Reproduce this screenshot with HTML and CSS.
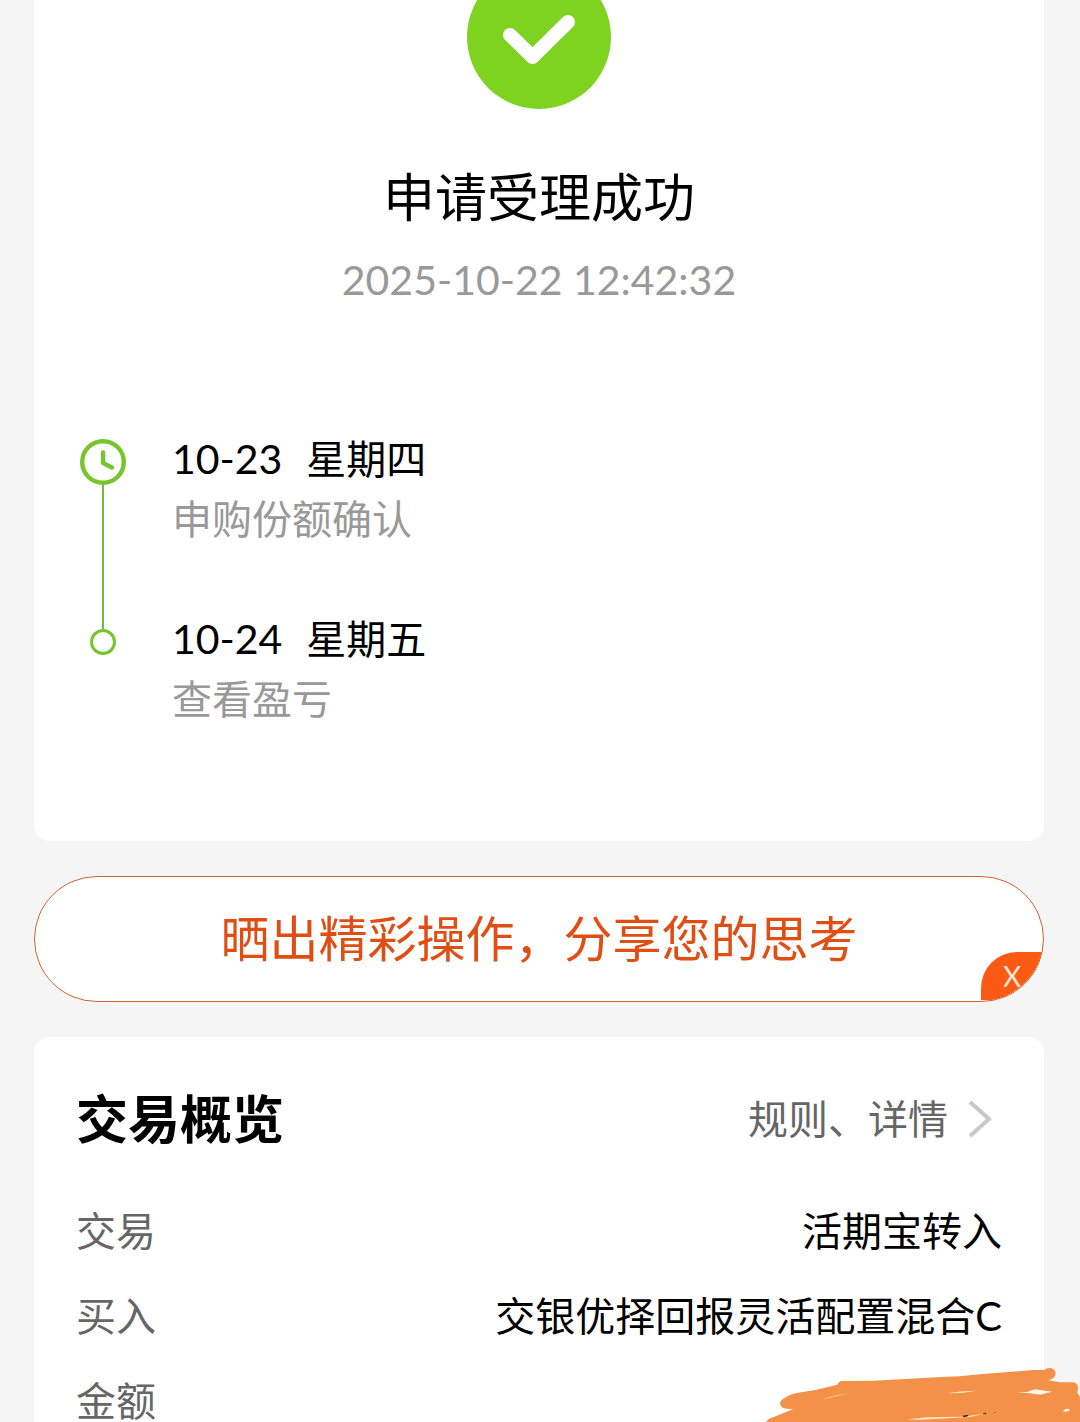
FILE: index.html
```html
<!DOCTYPE html>
<html lang="zh-CN">
<head>
    <meta charset="UTF-8">
    <meta name="viewport" content="width=device-width, initial-scale=1.0">
    <title>申请受理成功</title>

    <link rel="stylesheet" href="styles.css">
</head>
<body>
    <main class="page">
        <!-- result -->
        <section class="card result">
            <svg class="success-icon" viewBox="0 35 144 109" aria-hidden="true">
                <circle cx="72" cy="72" r="72" fill="#7ed321"/>
                <path d="M43 70 L65.500 92 L101 57" fill="none" stroke="#fff" stroke-width="14" stroke-linecap="round" stroke-linejoin="round"/>
            </svg>
            <h1 class="result-title">申请受理成功</h1>
            <time class="result-time">2025-10-22 12:42:32</time>

            <div class="timeline">
                <div class="timeline-track">
                    <svg class="clock-icon" viewBox="0 0 46 46" aria-hidden="true">
                        <circle cx="23" cy="23" r="20.800" fill="none" stroke="#76c62b" stroke-width="4.400"/>
                        <path d="M23 13.500 V24 L32 28.500" fill="none" stroke="#76c62b" stroke-width="4.400" stroke-linecap="round" stroke-linejoin="round"/>
                    </svg>
                    <span class="timeline-line"></span>
                    <span class="timeline-dot"></span>
                </div>
                <ol class="timeline-list">
                    <li>
                        <p class="step-date"><span class="step-day">10-23</span><span>星期四</span></p>
                        <p class="step-name">申购份额确认</p>
                    </li>
                    <li>
                        <p class="step-date"><span class="step-day">10-24</span><span>星期五</span></p>
                        <p class="step-name">查看盈亏</p>
                    </li>
                </ol>
            </div>
        </section>

        <!-- share banner -->
        <div class="share">
            <button type="button" class="share-btn">晒出精彩操作，分享您的思考</button>
            <button type="button" class="share-close" aria-label="关闭">X</button>
        </div>

        <!-- overview -->
        <section class="card overview">
            <div class="overview-head">
                <h2 class="overview-title">交易概览</h2>
                <a href="#" class="overview-link">
                    规则、详情
                    <svg class="chevron" viewBox="0 0 24 38" aria-hidden="true">
                        <path d="M2 2 L21 19 L2 36" fill="none" stroke="#c8c8c8" stroke-width="4"/>
                    </svg>
                </a>
            </div>
            <dl class="detail-list">
                <div class="detail-row">
                    <dt>交易</dt>
                    <dd>活期宝转入</dd>
                </div>
                <div class="detail-row">
                    <dt>买入</dt>
                    <dd>交银优择回报灵活配置混合C</dd>
                </div>
                <div class="detail-row">
                    <dt>金额</dt>
                    <dd></dd>
                </div>
            </dl>
            <!-- marker strokes hiding the amount -->
            <svg class="scribble" viewBox="60 48 960 168" aria-hidden="true">
                <path fill="#f39149" d="M78 216 Q84 206 100 202 L160 177 L140 176 Q120 174 120 158 Q122 150 135 143 Q150 132 170 129 Q230 121 292 104 Q297 93 305 93 Q350 92 400 92 L590 82 Q660 80 720 73 L880 60 L912 60 Q920 54 930 54 Q946 56 947 72 Q944 86 925 91 L960 97 L1000 97 Q1014 100 1014 114 L1012 130 Q1020 136 1020 146 V216 Z"/>
                <path fill="#fde3c0" d="M250 146 L290 136 L328 130 L300 136 L252 147 Z M622 130 Q660 122 710 122 L665 129 Z M502 208 L560 202 L665 200 L735 191 L690 201 L600 206 L535 210 Z"/>
                <path fill="#fff8ec" d="M830 129 L860 126 L885 118 L936 125 L900 134 L865 129 Z M968 185 L976 177 L989 176 L986 184 Z"/>
                <path fill="#3a2010" d="M668 197 L685 194 L684 199 L671 202 Z M729 190 L738 188 L739 191 L731 192 Z M762 187 L766 186 L765 189 Z"/>
            </svg>
        </section>
    </main>
</body>
</html>
```
FILE: styles.css
```css
* {
    box-sizing: border-box;
}

body {
    margin: 0;
    background-color: #f5f5f5;
    color: #000;
    font-family: "Lato", "Noto Sans CJK SC", sans-serif;
    font-size: 40px;
    line-height: 60px;
}

h1, h2, p, ol, dl, dd {
    margin: 0;
    padding: 0;
}

button {
    font-family: inherit;
    border: none;
    cursor: pointer;
}

.page {
    display: flex;
    flex-direction: column;
    gap: 35px;
    padding: 0 36px 0 34px;
}

.card {
    position: relative;
    background-color: #fff;
    border-radius: 16px;
    padding: 52px 42px;
}

/* result */
.result {
    display: flex;
    flex-direction: column;
    align-items: center;
    border-radius: 0 0 16px 16px;
    padding-top: 0;
    padding-bottom: 112px;
}

.success-icon {
    width: 144px;
    height: 109px;
}

.result-title {
    margin-top: 58px;
    font-size: 52px;
    font-weight: 400;
}

.result-time {
    margin-top: 23px;
    font-size: 41px;
    color: #999;
}

.timeline {
    display: flex;
    gap: 42px;
    align-self: stretch;
    margin-top: 119px;
}

.timeline-track {
    display: flex;
    flex-direction: column;
    align-items: center;
    width: 54px;
    padding: 10px 0 74px;
}

.clock-icon {
    width: 46px;
    height: 46px;
}

.timeline-line {
    flex: 1;
    width: 2px;
    background-color: #76b840;
}

.timeline-dot {
    width: 26px;
    height: 26px;
    border: 3px solid #76c62b;
    border-radius: 50%;
}

.timeline-list {
    display: flex;
    flex-direction: column;
    gap: 60px;
    list-style: none;
}

.step-date {
    display: flex;
    gap: 24px;
}

.step-day {
    font-size: 41px;
}

.step-name {
    color: #999;
}

/* share banner */
.share {
    position: relative;
    overflow: hidden;
    border: 1px solid #d2622f;
    border-radius: 63px;
    background-color: #fff;
}

.share-btn {
    display: block;
    width: 100%;
    padding: 31px 0 33px;
    background: none;
    color: #e04e14;
    font-size: 49px;
    line-height: 60px;
}

.share-close {
    position: absolute;
    right: 0;
    bottom: 1px;
    width: 62px;
    height: 48px;
    padding: 0;
    border-radius: 36px 0 0 0;
    background-color: #fa5a14;
    color: #ffe9d6;
    font-size: 28px;
}

/* overview */
.overview-head,
.detail-row {
    display: flex;
    justify-content: space-between;
}

.overview-title {
    font-size: 52px;
    font-weight: 700;
}

.overview-link {
    display: flex;
    align-items: center;
    gap: 20px;
    padding-right: 10px;
    color: #666;
    text-decoration: none;
}

.chevron {
    width: 24px;
    height: 38px;
}

.detail-list {
    display: flex;
    flex-direction: column;
    gap: 25px;
    margin-top: 52px;
}

.detail-row dt {
    color: #666;
}

.scribble {
    position: absolute;
    top: 329px;
    right: -36px;
    width: 320px;
    height: 56px;
}
```
